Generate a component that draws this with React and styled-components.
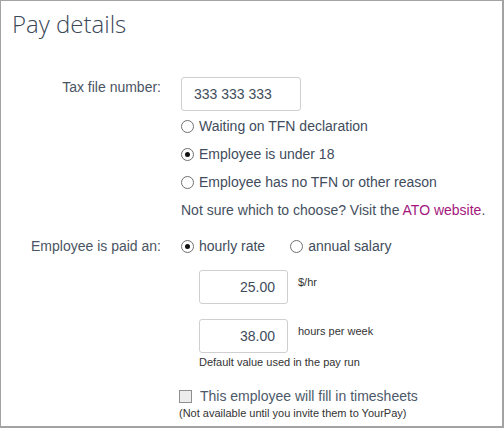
import React from 'react';
import styled, { createGlobalStyle } from 'styled-components';

const Global = createGlobalStyle`
  html, body { margin: 0; padding: 0; background: #fff; }
  body { font-family: "Liberation Sans", Arial, sans-serif; color: #45505e; }
`;

const Panel = styled.div`
  box-sizing: border-box;
  width: 504px;
  height: 428px;
  border: 1px solid #a3a3a3;
  border-right-width: 2px;
  border-bottom-width: 2px;
  background: #fff;
  overflow: hidden;
`;

const Title = styled.h2`
  margin: 0;
  padding: 7px 0 0 11px;
  font-family: "Open Sans", sans-serif;
  font-weight: 300;
  font-size: 24px;
  line-height: 32px;
  color: #3b4859;
`;

const Form = styled.div`
  padding-top: 37px;
  display: flex;
  flex-direction: column;
  gap: 16px;
`;

const Row = styled.div`
  display: grid;
  grid-template-columns: 160px 1fr;
  column-gap: 20px;
  align-items: start;
`;

const Label = styled.div`
  text-align: right;
  font-size: 14px;
  line-height: 20px;
  color: #4a5563;
`;

const Column = styled.div`
  display: flex;
  flex-direction: column;
  align-items: flex-start;
`;

const TextBox = styled.div`
  box-sizing: border-box;
  width: ${p => p.$w}px;
  height: 34px;
  border: 1px solid #cfcfcf;
  border-radius: 3px;
  padding: 0 12px;
  display: flex;
  align-items: center;
  justify-content: ${p => (p.$right ? 'flex-end' : 'flex-start')};
  font-size: 14px;
  color: #414c5c;
  background: #fff;
`;

const Options = styled.div`
  margin-top: 5px;
  display: flex;
  flex-direction: column;
  gap: 8px;
`;

const Choice = styled.label`
  display: flex;
  align-items: center;
  gap: 5px;
  font-size: 14px;
  line-height: 20px;
  color: #414c5c;
`;

const Radio = styled.span`
  box-sizing: border-box;
  width: 13px;
  height: 13px;
  border-radius: 50%;
  border: 1px solid #6f6f6f;
  background: #fff;
  display: inline-flex;
  align-items: center;
  justify-content: center;
  flex: none;
  &::after {
    content: '';
    width: 5px;
    height: 5px;
    border-radius: 50%;
    background: ${p => (p.$checked ? '#111' : 'transparent')};
  }
`;

const Hint = styled.div`
  font-size: 14px;
  line-height: 20px;
  color: #45505e;
`;

const Link = styled.a`
  color: #a3177c;
  text-decoration: none;
`;

const InlineChoices = styled.div`
  display: flex;
  gap: 25px;
`;

const Amounts = styled.div`
  margin: 14px 0 0 18px;
  display: flex;
  flex-direction: column;
`;

const AmountRow = styled.div`
  display: flex;
  align-items: flex-start;
  gap: 10px;
  margin-top: ${p => p.$mt || 0}px;
`;

const Unit = styled.span`
  padding-top: 5px;
  font-size: 11px;
  line-height: 14px;
  color: #333;
`;

const SmallNote = styled.div`
  margin-top: ${p => p.$mt || 0}px;
  font-size: 11px;
  line-height: 14px;
  color: #333;
`;

const CheckBlock = styled.div`
  margin: 17px 0 0 -2px;
  display: flex;
  flex-direction: column;
`;

const CheckRow = styled.label`
  display: flex;
  align-items: center;
  gap: 8px;
  font-size: 14px;
  line-height: 20px;
  color: #4d596b;
`;

const Box = styled.span`
  box-sizing: border-box;
  width: 13px;
  height: 13px;
  border: 1px solid #8f8f8f;
  background: #ececec;
  flex: none;
`;

export default function App() {
  return (
    <>
      <Global />
      <Panel>
        <Title>Pay details</Title>
        <Form>
          <Row>
            <Label>Tax file number:</Label>
            <Column>
              <TextBox $w={120}>333 333 333</TextBox>
              <Options>
                <Choice><Radio />Waiting on TFN declaration</Choice>
                <Choice><Radio $checked />Employee is under 18</Choice>
                <Choice><Radio />Employee has no TFN or other reason</Choice>
                <Hint>
                  Not sure which to choose? Visit the <Link href="#">ATO website</Link>.
                </Hint>
              </Options>
            </Column>
          </Row>
          <Row>
            <Label>Employee is paid an:</Label>
            <Column>
              <InlineChoices>
                <Choice><Radio $checked />hourly rate</Choice>
                <Choice><Radio />annual salary</Choice>
              </InlineChoices>
              <Amounts>
                <AmountRow>
                  <TextBox $w={89} $right>25.00</TextBox>
                  <Unit>$/hr</Unit>
                </AmountRow>
                <AmountRow $mt={15}>
                  <TextBox $w={89} $right>38.00</TextBox>
                  <Unit>hours per week</Unit>
                </AmountRow>
                <SmallNote $mt={2}>Default value used in the pay run</SmallNote>
              </Amounts>
              <CheckBlock>
                <CheckRow><Box />This employee will fill in timesheets</CheckRow>
                <SmallNote>(Not available until you invite them to YourPay)</SmallNote>
              </CheckBlock>
            </Column>
          </Row>
        </Form>
      </Panel>
    </>
  );
}
